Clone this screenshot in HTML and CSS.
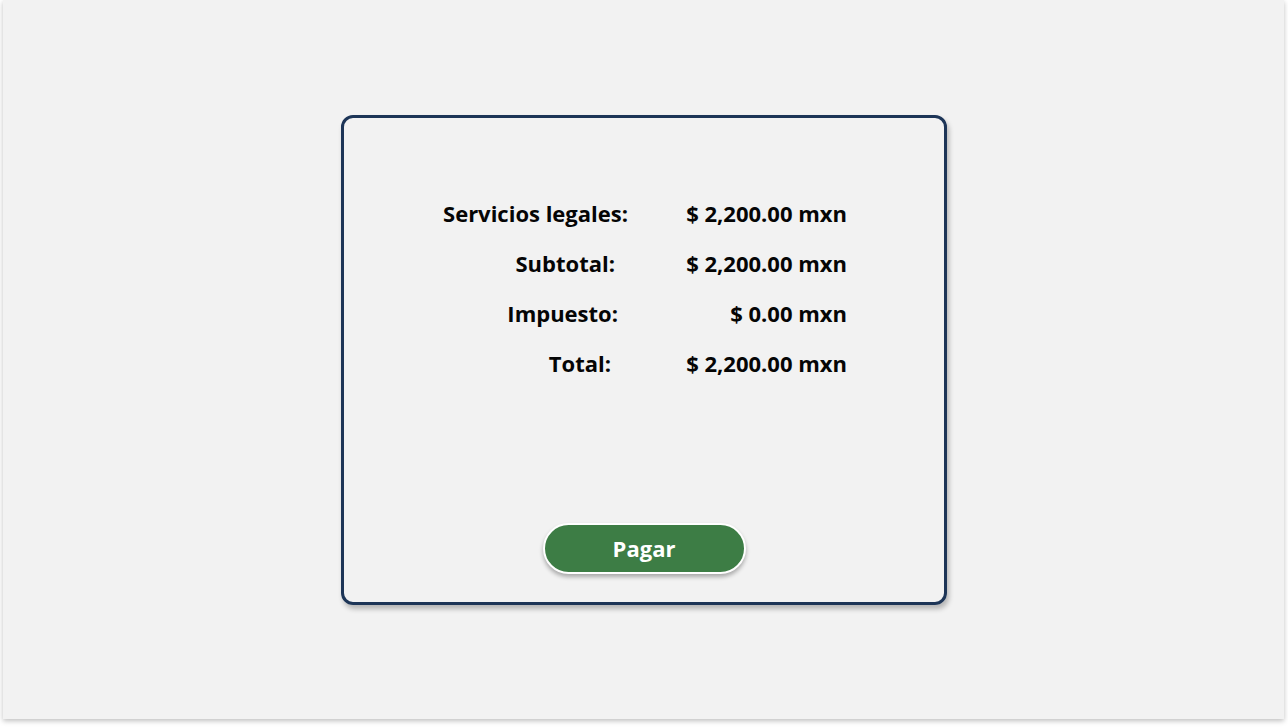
FILE: index.html
```html
<!DOCTYPE html>
<html lang="es">
<head>
  <meta charset="UTF-8" />
  <meta name="viewport" content="width=device-width, initial-scale=1.0"/>
  <title>Pago</title>
  <link rel="stylesheet" href="styles.css">
</head>
<body>

  <div class="pantalla">
    <div class="tarjeta">
      <div class="resumen">
        <div class="fila">
          <span class="concepto">Servicios legales:</span>
          <span class="monto">$ 2,200.00 mxn</span>
        </div>
        <div class="fila">
          <span class="concepto sub">Subtotal:</span>
          <span class="monto">$ 2,200.00 mxn</span>
        </div>
        <div class="fila">
          <span class="concepto imp">Impuesto:</span>
          <span class="monto">$ 0.00 mxn</span>
        </div>
        <div class="fila">
          <span class="concepto tot">Total:</span>
          <span class="monto">$ 2,200.00 mxn</span>
        </div>
      </div>
      <button class="btn-pagar">Pagar</button>
    </div>
  </div>

</body>
</html>
```

FILE: styles.css
```css
body {
  font-family: "Open Sans", Arial, sans-serif;
  background-color: #ffffff;
  margin: 0;
  padding: 0 4px 9px 3px;
}

.pantalla {
  height: 719px;
  background-color: #f2f2f2;
  box-shadow: 0 2px 5px rgba(0,0,0,0.25);
  display: flex;
  justify-content: center;
  align-items: flex-start;
  padding-top: 115px;
  box-sizing: border-box;
}

.tarjeta {
  width: 606px;
  height: 490px;
  margin-left: 1px;
  border: 3px solid #1d3557;
  border-radius: 12px;
  box-sizing: border-box;
  box-shadow: 2px 4px 5px rgba(0,0,0,0.25);
  display: flex;
  flex-direction: column;
  align-items: center;
  padding-top: 81px;
}

.resumen {
  display: grid;
  grid-template-columns: 186px 219px;
  row-gap: 22px;
  margin-left: 1px;
}

.fila {
  display: contents;
}

.concepto, .monto {
  font-size: 22px;
  font-weight: 700;
  color: #050505;
  line-height: 28px;
  text-align: right;
  white-space: nowrap;
}

.sub { margin-right: 13px; }
.imp { margin-right: 10px; }
.tot { margin-right: 17px; }

.btn-pagar {
  margin-top: auto;
  margin-bottom: 28px;
  width: 203px;
  height: 51px;
  padding: 0 0 1px;
  background-color: #3d7d45;
  color: white;
  border: 2px solid #ffffff;
  border-radius: 26px;
  box-shadow: 0 3px 4px rgba(0,0,0,0.3);
  font-family: "Open Sans", Arial, sans-serif;
  font-size: 22px;
  font-weight: 700;
  cursor: pointer;
}
```
